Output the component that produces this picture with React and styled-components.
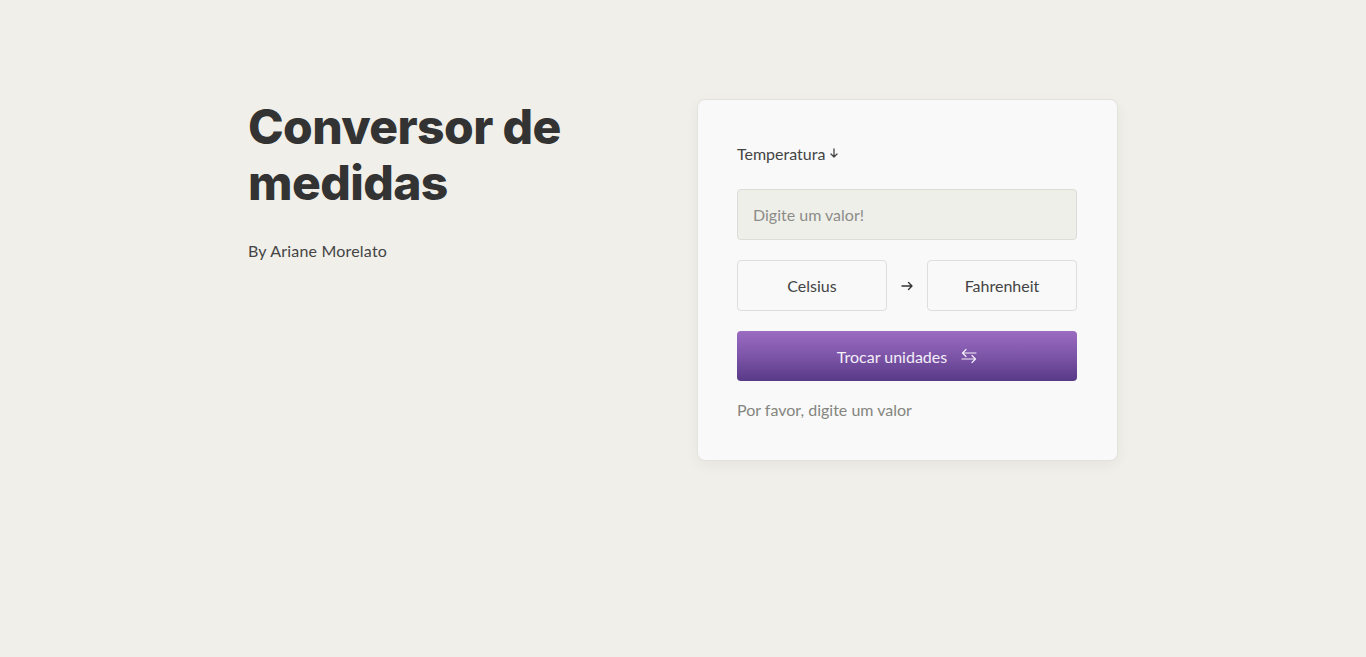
import React from "react";
import styled, { createGlobalStyle } from "styled-components";

const Global = createGlobalStyle`
  html, body { margin: 0; padding: 0; background: #f0efea; }
  body { font-family: "Lato", "Open Sans", sans-serif; color: #333; }
  * { box-sizing: border-box; }
`;

const Page = styled.main`
  min-height: 657px;
  padding-top: 99px;
`;

const Wrap = styled.div`
  width: 870px;
  margin: 0 auto;
  display: flex;
  justify-content: space-between;
  align-items: flex-start;
`;

const Intro = styled.section`
  padding-top: 0;
`;

const Title = styled.h1`
  margin: 0;
  font-family: "Inter", "Lato", sans-serif;
  font-weight: 800;
  font-size: 48px;
  line-height: 56px;
  color: #333;
  width: 340px;
  letter-spacing: -0.6px;
`;

const Byline = styled.p`
  margin: 30px 0 0;
  font-size: 16px;
  letter-spacing: 0.2px;
  color: #444;
`;

const Card = styled.section`
  width: 421px;
  background: #f8f9f8;
  border: 1px solid #e2e2de;
  border-radius: 8px;
  padding: 42px 40px 41px 39px;
  box-shadow: 0 4px 14px rgba(0, 0, 0, 0.05);
  display: flex;
  flex-direction: column;
`;

const Category = styled.label`
  display: flex;
  align-items: center;
  gap: 4px;
  font-size: 16px;
  color: #444;
  height: 22px;
`;

const Input = styled.input`
  margin-top: 25px;
  height: 51px;
  width: 100%;
  border: 1px solid #dcdcd8;
  border-radius: 4px;
  background: #efefea;
  padding: 0 15px;
  font: inherit;
  font-size: 16px;
  color: #333;
  &::placeholder { color: #8c8c88; }
  outline: none;
`;

const Units = styled.div`
  margin-top: 20px;
  display: grid;
  grid-template-columns: 150px 1fr 150px;
  align-items: center;
`;

const UnitBox = styled.div`
  height: 51px;
  border: 1px solid #dedede;
  border-radius: 4px;
  background: #f8f9f8;
  display: flex;
  align-items: center;
  justify-content: center;
  font-size: 16px;
  color: #444;
`;

const Between = styled.div`
  display: flex;
  justify-content: center;
`;

const SwapButton = styled.button`
  margin-top: 20px;
  height: 50px;
  width: 100%;
  border: none;
  border-radius: 4px;
  background: linear-gradient(180deg, #9b6cc1 0%, #7d55a8 50%, #583a87 100%);
  color: #f3eef8;
  font: inherit;
  font-size: 16px;
  display: flex;
  align-items: center;
  justify-content: center;
  gap: 14px;
  cursor: pointer;
`;

const Message = styled.p`
  margin: 19px 0 0;
  font-size: 16px;
  color: #858580;
`;

const DownArrow = () => (
  <svg width="10" height="12" viewBox="0 0 10 12" fill="none" stroke="#444" strokeWidth="1.3" strokeLinecap="round" strokeLinejoin="round">
    <path d="M5 2v8M2 7l3 3 3-3" />
  </svg>
);

const RightArrow = () => (
  <svg width="12" height="10" viewBox="0 0 12 10" fill="none" stroke="#333" strokeWidth="1.4" strokeLinecap="round" strokeLinejoin="round">
    <path d="M1 5h10M7.5 1.5 11 5 7.5 8.5" />
  </svg>
);

const SwapIcon = () => (
  <svg width="16" height="16" viewBox="0 0 16 16" fill="none" stroke="#f3eef8" strokeWidth="1.2" strokeLinecap="round" strokeLinejoin="round">
    <path d="M15 5H1.5M5 1.5 1.5 5 5 8.5" />
    <path d="M1 11h13.5M11 7.5l3.5 3.5-3.5 3.5" />
  </svg>
);

export default function App() {
  return (
    <>
      <Global />
      <Page>
        <Wrap>
          <Intro>
            <Title>Conversor de medidas</Title>
            <Byline>By Ariane Morelato</Byline>
          </Intro>
          <Card>
            <Category>
              Temperatura <DownArrow />
            </Category>
            <Input placeholder="Digite um valor!" />
            <Units>
              <UnitBox>Celsius</UnitBox>
              <Between>
                <RightArrow />
              </Between>
              <UnitBox>Fahrenheit</UnitBox>
            </Units>
            <SwapButton>
              Trocar unidades <SwapIcon />
            </SwapButton>
            <Message>Por favor, digite um valor</Message>
          </Card>
        </Wrap>
      </Page>
    </>
  );
}
